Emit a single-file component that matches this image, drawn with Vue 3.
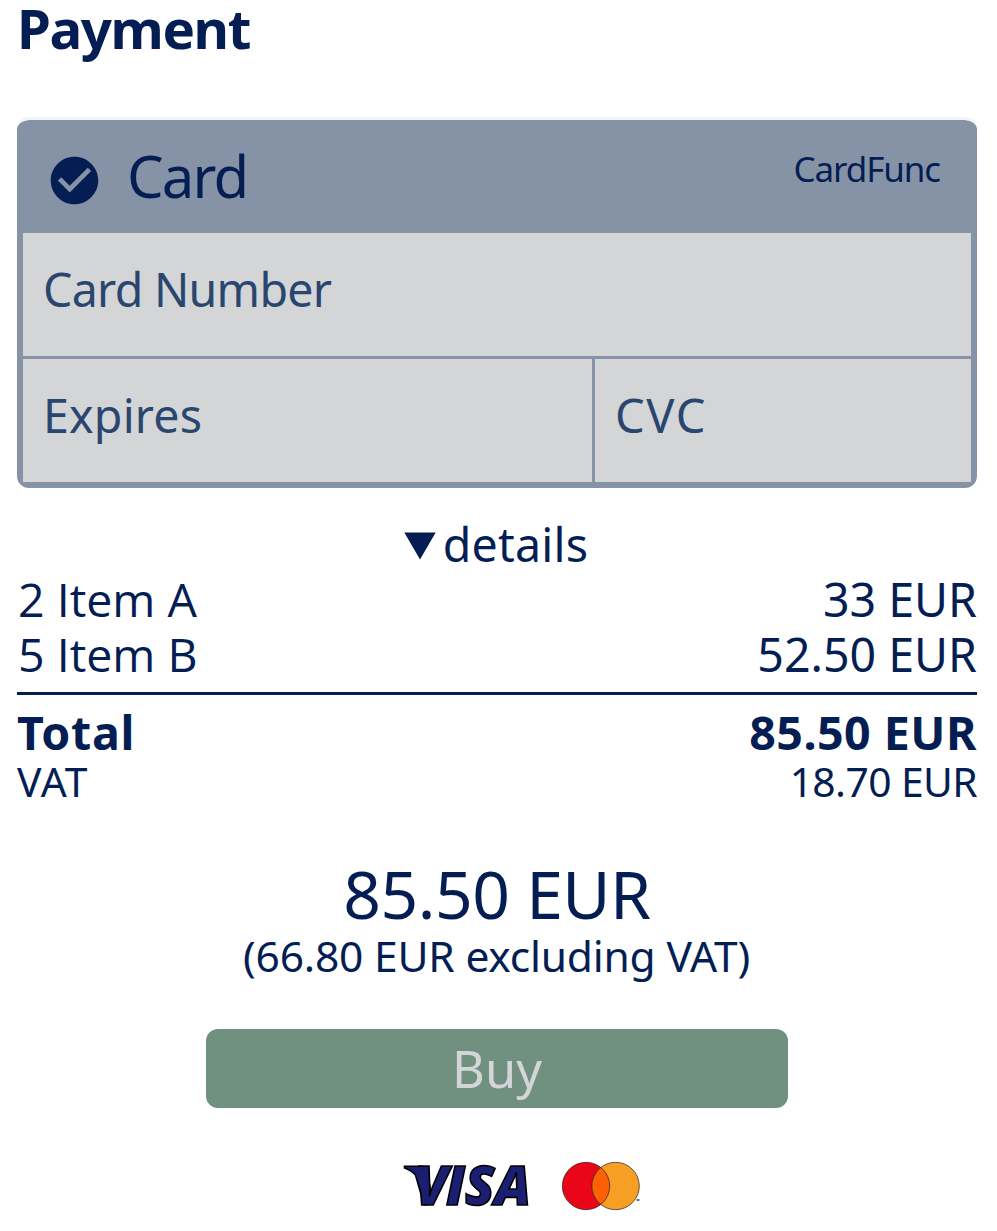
<script setup>
const items = [
  { label: '2 Item A', price: '33 EUR', key: 'a' },
  { label: '5 Item B', price: '52.50 EUR', key: 'b' },
]
</script>

<template>
  <main class="page">
    <h1 class="title">Payment</h1>

    <section class="card">
      <header class="card-head">
        <svg class="check" viewBox="0 0 24 24" width="57" height="57">
          <path d="M12 2C6.48 2 2 6.48 2 12s4.48 10 10 10 10-4.48 10-10S17.52 2 12 2zm-2 15l-5-5 1.41-1.41L10 14.17l7.59-7.59L19 8l-9 9z" fill="#041e54" />
        </svg>
        <span class="card-name">Card</span>
        <span class="card-brand">CardFunc</span>
      </header>
      <div class="fields">
        <div class="field wide"><span class="number">Card Number</span></div>
        <div class="field"><span class="expires">Expires</span></div>
        <div class="field"><span class="cvc">CVC</span></div>
      </div>
    </section>

    <div class="details">
      <svg width="32" height="28" viewBox="0 0 32 28"><path d="M0.3 0.5H31.7L16 27.5z" fill="#041e54" /></svg>
      <span>details</span>
    </div>

    <div class="items">
      <div v-for="item in items" :key="item.key" class="row">
        <span class="item-label">{{ item.label }}</span>
        <span>{{ item.price }}</span>
      </div>
    </div>

    <div class="row total"><span class="total-label">Total</span><span class="total-price">85.50 EUR</span></div>
    <div class="row vat"><span class="vat-label">VAT</span><span class="vat-price">18.70 EUR</span></div>

    <div class="sum">85.50 EUR</div>
    <div class="net">(66.80 EUR excluding VAT)</div>

    <button class="buy" type="button">Buy</button>

    <div class="brands">
      <svg class="visa" width="131" height="50" viewBox="0 0 131 50">
        <path d="M2.5 5.3H19Q24 5.3 25 10L28 26L25 43.7H22L13.5 14Q9 9 2.5 7z" fill="#1a1f71" stroke="#000" stroke-width="1.6" />
        <text class="visa-text" y="44" x="13 44 63 92.5">VISA</text>
        <path d="M13 6.3H19Q23.2 6.3 24 10L27 26L26 42.7H23L14.5 13.5Q12 10 9 7.5z" fill="#1a1f71" />
      </svg>
      <svg class="mastercard" width="80" height="50" viewBox="0 0 80 50">
        <circle cx="25" cy="25" r="23.7" fill="#eb0519" />
        <circle cx="54.6" cy="25" r="23.7" fill="#f79f24" />
        <path d="M39.8 6.5A23.7 23.7 0 0 1 39.8 43.5A23.7 23.7 0 0 1 39.8 6.5z" fill="#ff5f05" />
        <g fill="none" stroke="#222" stroke-width="0.7">
          <circle cx="25" cy="25" r="23.7" />
          <circle cx="54.6" cy="25" r="23.7" />
        </g>
        <path d="M75.5 39H78.5" stroke="#111" stroke-width="1.2" />
      </svg>
    </div>
  </main>
</template>

<style>
body { background: #fff; }
</style>

<style scoped>
.page {
  box-sizing: border-box;
  width: 997px;
  height: 1231px;
  padding: 0 20px 0 17px;
  overflow: hidden;
  color: #041e54;
  font-family: "Noto Sans", sans-serif;
  font-size: 46.5px;
  line-height: 55px;
  white-space: nowrap;
}
.title { margin: 0; font-size: 54.6px; line-height: 56px; font-weight: 700; letter-spacing: -1.4px; }
.card {
  margin-top: 61px;
  border-top: 3px solid #f1f4f6;
  border-radius: 12px;
  background: #8693a6;
  background-clip: padding-box;
  height: 368px;
}
.card-head { display: flex; height: 113px; padding: 0 37px 0 29px; }
.check { margin-top: 32px; flex: none; }
.card-name { margin: 20px 0 0 24px; font-size: 58px; line-height: 72px; letter-spacing: -1.8px; }
.card-brand { margin: 25px 0 0 auto; font-size: 35px; line-height: 48px; letter-spacing: -1.1px; }
.fields {
  display: grid;
  grid-template-columns: 569px 376px;
  grid-template-rows: 123px 123px;
  gap: 3px;
  margin: 0 6px;
}
.field { padding: 29px 0 0 20px; background: #d4d5d7; color: #2a466f; }
.wide { grid-column: 1 / 3; }
.number { letter-spacing: -0.7px; }
.expires { letter-spacing: 0.2px; }
.cvc { font-size: 47px; letter-spacing: 1.6px; }
.details { display: flex; justify-content: center; gap: 7px; margin: 29px 2px 0 0; letter-spacing: 0.2px; }
.details svg { margin-top: 15px; }
.row { display: flex; justify-content: space-between; }
.items { padding-bottom: 10px; border-bottom: 3px solid #041e54; }
.item-label { font-family: "Open Sans", sans-serif; padding-left: 1px; }
.total { margin-top: 10px; font-weight: 700; }
.total-label { letter-spacing: 0.7px; }
.total-price { letter-spacing: 0.5px; }
.vat { font-size: 40.8px; line-height: 48px; margin-top: -3px; }
.vat-label { letter-spacing: 0.8px; }
.vat-price { letter-spacing: -0.6px; }
.sum { margin-top: 50px; font-size: 66px; line-height: 76px; text-align: center; letter-spacing: -0.5px; }
.net { font-size: 42.5px; line-height: 50px; text-align: center; letter-spacing: -0.2px; padding-right: 1px; }
.buy {
  display: block;
  width: 582px;
  height: 79px;
  margin: 48px auto 0;
  padding: 0;
  border: 0;
  border-radius: 12px;
  background: #70917f;
  color: #d4d5d9;
  font-family: inherit;
  font-size: 50.5px;
  line-height: 79px;
}
.brands { display: flex; gap: 28px; margin: 53px 0 0 385px; }
.visa-text {
  font: italic 800 54px "Open Sans", sans-serif;
  fill: #1a1f71;
  stroke: #000;
  stroke-width: 1.6px;
}
</style>
